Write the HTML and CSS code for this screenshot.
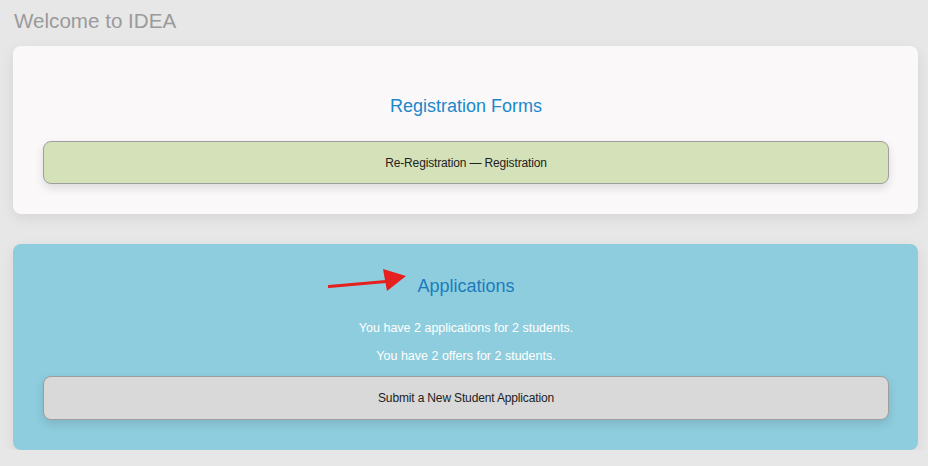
FILE: index.html
```html
<!DOCTYPE html>
<html>
<head>
<meta charset="utf-8">
<link rel="stylesheet" href="styles.css">
</head>
<body>
<div class="page">
  <h1 class="welcome">Welcome to IDEA</h1>
  <section class="card card-white">
    <h2 class="card-title reg-title">Registration Forms</h2>
    <button class="btn btn-green">Re-Registration — Registration</button>
  </section>
  <section class="card card-blue">
    <svg class="arrow" width="90" height="30" viewBox="0 0 90 30">
      <path d="M1 22.5 L58 17.5" stroke="#e5201f" stroke-width="3" stroke-linecap="round" fill="none"/>
      <path d="M55 5 L78 12 L59 27 Z" fill="#e5201f"/>
    </svg>
    <h2 class="card-title app-title">Applications</h2>
    <p class="info">You have 2 applications for 2 students.</p>
    <p class="info">You have 2 offers for 2 students.</p>
    <button class="btn btn-gray">Submit a New Student Application</button>
  </section>
</div>
</body>
</html>
```
FILE: styles.css
```css
html, body {
  margin: 0;
  padding: 0;
  background: #e7e7e7;
  font-family: "Liberation Sans", Arial, sans-serif;
}
.page {
  padding: 9px 10px 0 13px;
  display: flex;
  flex-direction: column;
}
.welcome {
  margin: 0 0 0 1px;
  font-size: 20.6px;
  font-weight: normal;
  line-height: 24px;
  color: #9a9a9a;
  height: 37px;
}
.card {
  border-radius: 8px;
  padding: 0 29px 30px 30px;
  display: flex;
  flex-direction: column;
  align-items: stretch;
  box-shadow: 0 4px 14px rgba(0,0,0,0.08);
}
.card-white {
  background: #faf8f9;
  height: 168px;
  box-sizing: border-box;
  margin-bottom: 30px;
}
.card-blue {
  background: #8ecddd;
  position: relative;
  height: 206px;
  box-sizing: border-box;
}
.card-title {
  margin: 0;
  font-weight: normal;
  text-align: center;
  font-size: 18px;
  line-height: 20px;
}
.reg-title {
  color: #1c88cb;
  padding-top: 50px;
  margin-bottom: 25px;
}
.app-title {
  color: #1b7cbd;
  padding-top: 32px;
  margin-bottom: 25px;
}
.info {
  margin: 0;
  text-align: center;
  color: #ffffff;
  font-size: 12.5px;
  line-height: 15px;
  margin-bottom: 13px;
}
.info + .info {
  margin-bottom: 12px;
}
.btn {
  height: 45px;
  border: 1px solid #9e9e9e;
  border-radius: 8px;
  font-family: "Liberation Sans", Arial, sans-serif;
  font-size: 12px;
  color: #222;
  box-shadow: 0 4px 10px rgba(0,0,0,0.12);
  cursor: pointer;
  letter-spacing: -0.15px;
}
.btn-green {
  background: #d5e1b8;
}
.btn-gray {
  background: #d9d9d9;
}
.arrow {
  position: absolute;
  left: 315px;
  top: 20px;
}
```
